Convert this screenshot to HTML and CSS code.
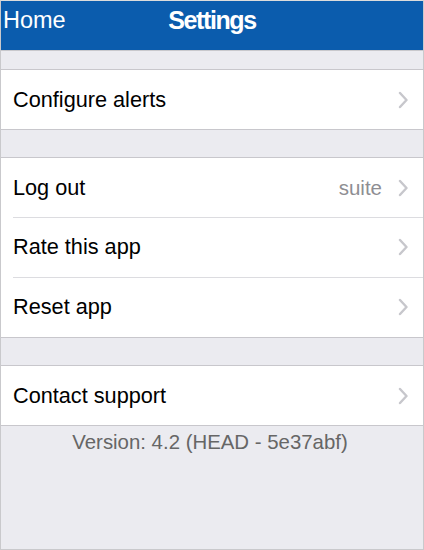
FILE: index.html
```html
<!DOCTYPE html>
<html>
<head>
<meta charset="utf-8">
<link rel="stylesheet" href="styles.css">
</head>
<body>
<div class="frame">
  <header class="nav">
    <span class="nav-back">Home</span>
    <span class="nav-title">Settings</span>
  </header>
  <section class="group">
    <div class="row"><span class="label">Configure alerts</span><span class="chev"><svg width="10" height="18" viewBox="0 0 10 18"><path d="M2 2 L8.5 9 L2 16" fill="none" stroke="#c7c7cc" stroke-width="2.4" stroke-linecap="round" stroke-linejoin="round"/></svg></span></div>
  </section>
  <section class="group">
    <div class="row"><span class="label">Log out</span><span class="detail">suite</span><span class="chev"><svg width="10" height="18" viewBox="0 0 10 18"><path d="M2 2 L8.5 9 L2 16" fill="none" stroke="#c7c7cc" stroke-width="2.4" stroke-linecap="round" stroke-linejoin="round"/></svg></span></div>
    <div class="row"><span class="label">Rate this app</span><span class="chev"><svg width="10" height="18" viewBox="0 0 10 18"><path d="M2 2 L8.5 9 L2 16" fill="none" stroke="#c7c7cc" stroke-width="2.4" stroke-linecap="round" stroke-linejoin="round"/></svg></span></div>
    <div class="row"><span class="label">Reset app</span><span class="chev"><svg width="10" height="18" viewBox="0 0 10 18"><path d="M2 2 L8.5 9 L2 16" fill="none" stroke="#c7c7cc" stroke-width="2.4" stroke-linecap="round" stroke-linejoin="round"/></svg></span></div>
  </section>
  <section class="group">
    <div class="row"><span class="label">Contact support</span><span class="chev"><svg width="10" height="18" viewBox="0 0 10 18"><path d="M2 2 L8.5 9 L2 16" fill="none" stroke="#c7c7cc" stroke-width="2.4" stroke-linecap="round" stroke-linejoin="round"/></svg></span></div>
  </section>
  <p class="version">Version: 4.2 (HEAD - 5e37abf)</p>
</div>
</body>
</html>
```
FILE: styles.css
```css
html, body {
  margin: 0;
  padding: 0;
}
body {
  font-family: "Liberation Sans", Arial, sans-serif;
  background: #ebebf0;
}
.frame {
  box-sizing: border-box;
  width: 424px;
  height: 550px;
  border: 1px solid #c9c9cc;
  border-top-color: #dcdcdc;
  background: #ebebf0;
  display: flex;
  flex-direction: column;
}
.nav {
  height: 50px;
  background: #0b5cad;
  color: #fff;
  display: grid;
  grid-template-columns: 1fr auto 1fr;
  align-items: start;
  padding-top: 3px;
  box-sizing: border-box;
  border-bottom: 1px solid #c8c8cc;
}
.nav-back {
  font-size: 23.5px;
  line-height: 32px;
  padding-left: 2px;
}
.nav-title {
  font-size: 25px;
  line-height: 32px;
  font-weight: bold;
  letter-spacing: -1.4px;
}
.group {
  margin-top: 18px;
  background: #fff;
  border-top: 1px solid #c8c7cc;
  border-bottom: 1px solid #c8c7cc;
}
.group + .group {
  margin-top: 27px;
}
.row {
  height: 59px;
  display: flex;
  align-items: center;
  padding-left: 12px;
  padding-right: 15px;
  position: relative;
}
.row + .row::before {
  content: "";
  position: absolute;
  top: 0;
  left: 12px;
  right: 0;
  border-top: 1px solid #dcdce0;
}
.row + .row {
  height: 60px;
}
.label {
  flex: 1;
  font-size: 21.7px;
  color: #000;
}
.detail {
  font-size: 20.5px;
  color: #8e8e93;
  margin-right: 16px;
}
.chev {
  display: flex;
  align-items: center;
}
.version {
  margin: 4px 0 0;
  padding-right: 4px;
  text-align: center;
  font-size: 20.4px;
  line-height: 24px;
  color: #666;
}
```
